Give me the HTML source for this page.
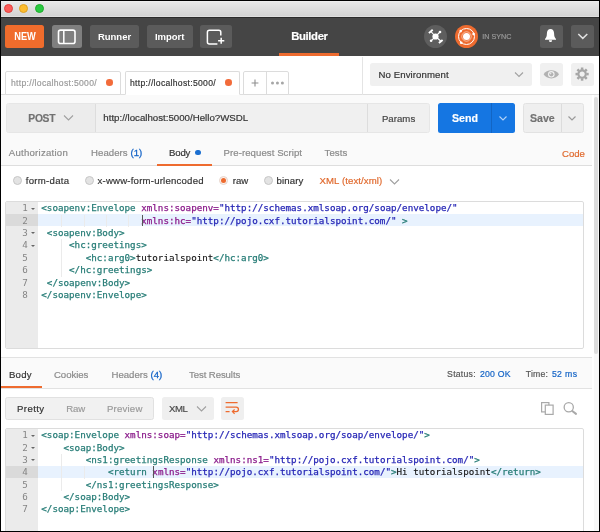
<!DOCTYPE html>
<html>
<head>
<meta charset="utf-8">
<title>Postman</title>
<style>
html,body{margin:0;padding:0;}
body{width:600px;height:532px;overflow:hidden;background:#000;font-family:"Liberation Sans",sans-serif;position:relative;}
#winbg{position:absolute;left:1px;top:1px;width:597.5px;height:529.5px;background:#fff;}
#win{position:absolute;left:1px;top:1px;width:597.5px;height:529.5px;overflow:hidden;will-change:transform;}
.abs{position:absolute;}
.t{position:absolute;white-space:nowrap;line-height:1;-webkit-text-stroke:0.18px currentColor;}
#titlebar{left:0;top:0;width:598px;height:15.5px;background:linear-gradient(#f4f4f4 0,#e8e8e8 6%,#d3d3d3 94%,#ebebeb 100%);}
.tl{position:absolute;top:3px;width:9.2px;height:9.2px;border-radius:50%;box-sizing:border-box;}
#toolbar{left:0;top:15.5px;width:598px;height:39.800px;background:#454545;}
.tbtn{position:absolute;top:8px;height:23.300px;border-radius:2.5px;background:#5b5b5b;color:#fff;font-weight:bold;font-size:9.5px;text-align:center;line-height:24.400px;}
#graybg{left:0;top:92.800px;width:591px;height:72.500px;background:#fafafa;border-top:1px solid #dedede;border-bottom:1px solid #dedede;box-sizing:border-box;}
.tab{position:absolute;top:69.500px;height:24px;border-radius:1.5px 1.5px 0 0;box-sizing:border-box;border:1px solid #dcdcdc;background:#fff;border-radius:2px 2px 0 0;}
.dot{position:absolute;width:6.600px;height:6.600px;border-radius:50%;background:#f26b3a;}
.box{position:absolute;box-sizing:border-box;background:#f0f0f0;border-radius:2.5px;}
.mono{font-family:"DejaVu Sans Mono","Liberation Mono",monospace;font-size:9.22px;white-space:pre;position:absolute;line-height:12.38px;height:12.38px;}
.tg{color:#277d77;} .at{color:#8a1a8a;} .st{color:#2626b6;} .tx{color:#111;} .mono span{-webkit-text-stroke:0.25px currentColor;} .mono span.tx{-webkit-text-stroke:0.1px currentColor;}
.ln{position:absolute;left:0;width:21.700px;text-align:right;font-family:"DejaVu Sans Mono","Liberation Mono",monospace;font-size:9.22px;color:#858585;line-height:12.38px;height:12.38px;}
.fold{position:absolute;left:25px;width:0;height:0;border-left:2px solid transparent;border-right:2px solid transparent;border-top:2.6px solid #666;}
.ig{position:absolute;width:0.8px;height:12.38px;background:#ebebeb;}
.radio{position:absolute;width:9.2px;height:9.2px;border-radius:50%;box-sizing:border-box;border:1px solid #c6c6c6;background:#e3e3e3;}
</style>
</head>
<body>
<div id="winbg"></div>
<div id="win">
  <!-- title bar -->
  <div id="titlebar" class="abs">
    <div class="tl" style="left:3px;background:#fc5b57;border:0.5px solid #df3f3c;"></div>
    <div class="tl" style="left:18.2px;background:#fdbc2e;border:0.5px solid #dea123;"></div>
    <div class="tl" style="left:33.7px;background:#29c940;border:0.5px solid #1dad2b;"></div>
  </div>
  <!-- toolbar -->
  <div id="toolbar" class="abs">
    <div class="abs" style="left:0;top:0;width:598px;height:1.2px;background:#2b2b2b;"></div>
    <div class="tbtn" style="left:4.2px;width:39.3px;background:#f06c2c;font-size:10.300px;line-height:24.200px;"><span style="display:inline-block;transform:scaleX(0.9);">NEW</span></div>
    <div class="tbtn" style="left:50.7px;width:30.8px;background:#7f7f7f;">
      <svg width="31" height="23.3" viewBox="0 0 31 23.3" style="position:absolute;left:0;top:0"><rect x="6.500" y="5.100" width="16.500" height="13.400" rx="2" fill="none" stroke="#fff" stroke-width="1.600"/><line x1="11.800" y1="5.100" x2="11.800" y2="18.500" stroke="#fff" stroke-width="1.500"/></svg>
    </div>
    <div class="tbtn" style="left:89px;width:49px;">Runner</div>
    <div class="tbtn" style="left:145.7px;width:46px;">Import</div>
    <div class="tbtn" style="left:199.4px;width:31.2px;">
      <svg width="31.2" height="23.3" viewBox="0 0 31.2 23.3" style="position:absolute;left:0;top:0"><path d="M20.800 10.600 V7.300 a2 2 0 0 0 -2 -2 H9.400 a2 2 0 0 0 -2 2 V17 a2 2 0 0 0 2 2 H17.400" fill="none" stroke="#fff" stroke-width="1.500"/><path d="M18.100 15.700 h6.200 M21.200 12.700 v6" stroke="#fff" stroke-width="1.500" fill="none"/></svg>
    </div>
    <div class="t" style="left:290.2px;top:14.200px;font-size:11.3px;color:#fff;font-weight:bold;letter-spacing:-0.35px;">Builder</div>
    <div class="abs" style="left:278px;top:36.5px;width:60px;height:2.500px;background:#ee6b2f;"></div>
    <!-- interceptor icon -->
    <div class="abs" style="left:423.3px;top:8.500px;width:23px;height:23px;border-radius:50%;background:#5e5e5e;">
      <svg width="23" height="23" viewBox="0 0 23 23"><g stroke="#fff" fill="none"><path d="M11.500 11.500 L6.800 6.400 M11.5 11.5 L16 7 M11.5 11.5 L7.100 15.800 M11.5 11.5 L16.700 16" stroke-width="1.100"/><path d="M4.900 8.100 L8.700 4.800 M14.900 18 L18.600 14.900" stroke-width="1.900"/></g><circle cx="11.5" cy="11.5" r="3.100" fill="#fff"/><circle cx="16" cy="7" r="1.300" fill="#fff"/><circle cx="7.100" cy="15.800" r="1.3" fill="#fff"/></svg>
    </div>
    <!-- sync icon -->
    <div class="abs" style="left:453.9px;top:8.5px;width:23px;height:23px;border-radius:50%;background:#ee6b2f;">
      <svg width="23" height="23" viewBox="0 0 23 23"><circle cx="11.5" cy="11.5" r="8" fill="none" stroke="#fff" stroke-width="1"/><circle cx="11.5" cy="11.500" r="4.700" fill="none" stroke="#fff" stroke-width="0.900" opacity="0.6"/><circle cx="11.5" cy="11.5" r="3.500" fill="#fff"/><circle cx="18.600" cy="9" r="1.300" fill="#fff"/><circle cx="5.700" cy="6.100" r="1.300" fill="#fff"/><circle cx="6.200" cy="17.700" r="1.300" fill="#fff"/></svg>
    </div>
    <div class="t" style="left:481.300px;top:16.400px;font-size:7.200px;color:#9a9a9a;">IN SYNC</div>
    <div class="tbtn" style="left:538.9px;width:23px;">
      <svg width="23" height="22.5" viewBox="0 0 23 22.5" style="position:absolute;left:0;top:0"><path d="M10.500 3.900 c-2.300 0 -3.600 2 -3.600 4.600 c0 2.900 -0.800 4.400 -1.900 5.500 v0.800 h11 v-0.800 c-1.100 -1.100 -1.900 -2.600 -1.900 -5.500 c0 -2.600 -1.300 -4.600 -3.600 -4.600 z" fill="#fff"/><path d="M8.900 15.200 a1.600 1.900 0 0 0 3.200 0 z" fill="#fff"/></svg>
    </div>
    <div class="tbtn" style="left:569.800px;width:23.100px;">
      <svg width="23" height="22.5" viewBox="0 0 23 22.5" style="position:absolute;left:0;top:0"><path d="M7.300 9 L11.800 13.400 L16.300 9" fill="none" stroke="#e0e0e0" stroke-width="1.500"/></svg>
    </div>
  </div>

  <!-- tabs row -->
  <div id="graybg" class="abs"></div>
  <div class="abs" style="left:360.5px;top:55.5px;width:1px;height:38px;background:#e4e4e4;"></div>
  <div class="tab" style="left:4px;width:115.5px;background:#fff;"></div>
  <div class="t" style="left:10.00px;top:78px;font-size:8.6px;color:#9a9a9a;letter-spacing:0.3px;">http://localhost:5000/</div>
  <div class="dot" style="left:105.400px;top:78.200px;"></div>
  <div class="tab" style="left:123.5px;width:115px;border-bottom-color:#fff;"></div>
  <div class="t" style="left:129.00px;top:78px;font-size:8.6px;color:#333;letter-spacing:0.3px;">http://localhost:5000/</div>
  <div class="dot" style="left:224.100px;top:78.200px;"></div>
  <div class="tab" style="left:241.800px;width:46px;"></div>
  <div class="abs" style="left:264.800px;top:70.5px;width:1px;height:22.5px;background:#dcdcdc;"></div>
  <svg class="abs" style="left:250.4px;top:78.1px" width="8" height="8" viewBox="0 0 8 8"><path d="M4 0.600 V7.400 M0.600 4 H7.400" stroke="#8e8e8e" stroke-width="1.100" fill="none"/></svg>
  <svg class="abs" style="left:269px;top:79.3px" width="16" height="6" viewBox="0 0 16 6"><circle cx="2.500" cy="3" r="1.500" fill="#a6a6a6"/><circle cx="7.450" cy="3" r="1.5" fill="#a6a6a6"/><circle cx="12.400" cy="3" r="1.5" fill="#a6a6a6"/></svg>

  <!-- environment -->
  <div class="box" style="left:369px;top:62.300px;width:162px;height:22.900px;"></div>
  <div class="t" style="left:377.50px;top:69.10px;font-size:9.6px;color:#333;letter-spacing:0.1px;">No Environment</div>
  <svg class="abs" style="left:513px;top:70px" width="10" height="8" viewBox="0 0 10 8"><path d="M1 1.5 L5 5.5 L9 1.5" fill="none" stroke="#a0a0a0" stroke-width="1.1"/></svg>
  <div class="box" style="left:539.2px;top:62.400px;width:22.600px;height:22.300px;">
    <svg width="22.6" height="22.3" viewBox="0 0 22.6 22.3" style="position:absolute;left:0;top:0"><path d="M3.600 11.300 C6.400 5.800 16.200 5.800 19 11.300 C16.200 16.800 6.400 16.800 3.600 11.300 z" fill="#b2b2b2"/><circle cx="11.300" cy="11.300" r="3.300" fill="#f0f0f0"/><circle cx="11.300" cy="11.300" r="2.100" fill="#b2b2b2"/><circle cx="10.600" cy="10.600" r="0.800" fill="#e4e4e4"/></svg>
  </div>
  <div class="box" style="left:569.800px;top:62.400px;width:23px;height:22.300px;">
    <svg width="23" height="22.3" viewBox="0 0 23 22.3" style="position:absolute;left:0;top:0"><g transform="translate(11.100 11.100)"><circle r="3.700" fill="none" stroke="#a6a6a6" stroke-width="2.100"/><g fill="#a6a6a6"><rect x="-1.250" y="-6.600" width="2.500" height="2.400"/><rect x="-1.250" y="4.200" width="2.500" height="2.400"/><rect x="-6.600" y="-1.250" width="2.400" height="2.500"/><rect x="4.200" y="-1.250" width="2.400" height="2.500"/><g transform="rotate(45)"><rect x="-1.250" y="-6.600" width="2.500" height="2.400"/><rect x="-1.250" y="4.200" width="2.500" height="2.400"/><rect x="-6.600" y="-1.250" width="2.400" height="2.500"/><rect x="4.200" y="-1.250" width="2.400" height="2.500"/></g></g></g></svg>
  </div>

  <!-- URL bar -->
  <div class="box" style="left:4.5px;top:101.5px;width:424.3px;height:30.5px;background:#f0f0f0;border:1px solid #e6e6e6;"></div>
  <div class="abs" style="left:5.5px;top:102.5px;width:88.5px;height:28.5px;background:#ececec;border-right:1px solid #dddddd;border-radius:2px 0 0 2px;"></div>
  <div class="t" style="left:27.35px;top:112.90px;font-size:10.3px;color:#727272;font-weight:bold;letter-spacing:-0.3px;">POST</div>
  <svg class="abs" style="left:62px;top:113.400px" width="11" height="8" viewBox="0 0 11 8"><path d="M1 1.500 L5.500 6 L10 1.5" fill="none" stroke="#a0a0a0" stroke-width="1.1"/></svg>
  <div class="t" style="left:102.30px;top:112.4px;font-size:9.7px;color:#333;">http://localhost:5000/Hello?WSDL</div>
  <div class="abs" style="left:366px;top:102.500px;width:61.800px;height:28.5px;background:#f0f0f0;border-left:1px solid #dddddd;box-sizing:border-box;border-radius:0 2px 2px 0;"></div>
  <div class="t" style="left:380.90px;top:112.50px;font-size:9.6px;color:#444;letter-spacing:0.05px;">Params</div>
  <div class="box" style="left:437px;top:101.5px;width:77px;height:30.5px;background:#1576e2;"></div>
  <div class="abs" style="left:489.800px;top:101.500px;width:1px;height:30.5px;background:#1265c4;"></div>
  <div class="t" style="left:451px;top:111.5px;font-size:10.6px;color:#fff;font-weight:bold;">Send</div>
  <svg class="abs" style="left:496.500px;top:113.500px" width="10" height="7" viewBox="0 0 10 7"><path d="M1.500 1.500 L5 5 L8.5 1.5" fill="none" stroke="#b4d3f6" stroke-width="1.1"/></svg>
  <div class="box" style="left:522.3px;top:101.5px;width:61px;height:30.5px;background:#efefef;border:1px solid #e2e2e2;"></div>
  <div class="abs" style="left:559.900px;top:102.5px;width:1px;height:28.5px;background:#dcdcdc;"></div>
  <div class="t" style="left:529px;top:111.5px;font-size:10.6px;color:#727272;font-weight:bold;">Save</div>
  <svg class="abs" style="left:566px;top:113.500px" width="10" height="7" viewBox="0 0 10 7"><path d="M1.5 1.5 L5 5 L8.5 1.500" fill="none" stroke="#9a9a9a" stroke-width="1.2"/></svg>

  <!-- request tabs -->
  <div class="t" style="left:7.75px;top:147px;font-size:9.6px;color:#8a8a8a;letter-spacing:0.25px;">Authorization</div>
  <div class="t" style="left:90px;top:147px;font-size:9.6px;color:#8a8a8a;letter-spacing:0.06px;">Headers <span style="color:#1766c8;-webkit-text-stroke:0.3px #1766c8;">(1)</span></div>
  <div class="t" style="left:168.00px;top:147px;font-size:9.6px;color:#333;letter-spacing:-0.15px;">Body</div>
  <div class="dot" style="left:194px;top:148.600px;width:5.800px;height:5.800px;background:#1b6fd0;"></div>
  <div class="abs" style="left:155.500px;top:162.800px;width:55.500px;height:2px;background:#ee6b2f;"></div>
  <div class="t" style="left:222.50px;top:147px;font-size:9.6px;color:#8a8a8a;letter-spacing:0.07px;">Pre-request Script</div>
  <div class="t" style="left:323.50px;top:147px;font-size:9.6px;color:#8a8a8a;letter-spacing:0.1px;">Tests</div>
  <div class="t" style="left:561.00px;top:148.40px;font-size:9.6px;color:#e0692d;letter-spacing:-0.05px;">Code</div>

  <!-- body type row -->
  <div class="radio" style="left:12px;top:175px;"></div>
  <div class="t" style="left:24.75px;top:175px;font-size:9.6px;color:#333;letter-spacing:0.28px;">form-data</div>
  <div class="radio" style="left:83.900px;top:175px;"></div>
  <div class="t" style="left:96.50px;top:175px;font-size:9.6px;color:#333;letter-spacing:0.21px;">x-www-form-urlencoded</div>
  <div class="radio" style="left:217.900px;top:175px;border-color:#e6d3ca;background:#fbf1ec;"><div class="abs" style="left:0.800px;top:0.800px;width:5.600px;height:5.600px;border-radius:50%;background:#ee6b2f;"></div></div>
  <div class="t" style="left:231.75px;top:175px;font-size:9.6px;color:#333;letter-spacing:0.04px;">raw</div>
  <div class="radio" style="left:262.900px;top:175px;"></div>
  <div class="t" style="left:275.50px;top:175px;font-size:9.6px;color:#333;letter-spacing:0.13px;">binary</div>
  <div class="t" style="left:318.50px;top:175px;font-size:9.6px;color:#e0692d;letter-spacing:0.1px;">XML (text/xml)</div>
  <svg class="abs" style="left:388px;top:177px" width="11" height="8" viewBox="0 0 11 8"><path d="M1 1.5 L5.5 6 L10 1.5" fill="none" stroke="#a0a0a0" stroke-width="1.1"/></svg>

  <!-- request editor -->
  <div class="abs" id="ed1" style="left:4px;top:200.300px;width:579px;height:147.800px;border:1px solid #dcdcdc;box-sizing:border-box;border-radius:2px;overflow:hidden;background:#fff;">
    <div class="abs" style="left:0;top:0;width:31.800px;height:146px;background:#ebebeb;"></div>
    <div class="abs" style="left:0;top:11.800px;width:31.800px;height:12.4px;background:#dadada;"></div>
    <div class="abs" style="left:31.800px;top:11.800px;width:546px;height:12.4px;background:#e8f2fe;"></div>
    <div class="ln" style="top:0px;">1</div><div class="fold" style="top:5.5px;"></div>
    <div class="ln" style="top:12.38px;">2</div>
    <div class="ln" style="top:24.76px;">3</div><div class="fold" style="top:30.2px;"></div>
    <div class="ln" style="top:37.14px;">4</div><div class="fold" style="top:42.6px;"></div>
    <div class="ln" style="top:49.52px;">5</div>
    <div class="ln" style="top:61.9px;">6</div>
    <div class="ln" style="top:74.28px;">7</div>
    <div class="ln" style="top:86.66px;">8</div>
    
    <div class="ig" style="left:55.40px;top:12.38px;"></div><div class="ig" style="left:77.60px;top:12.38px;"></div><div class="ig" style="left:99.81px;top:12.38px;"></div><div class="ig" style="left:122.01px;top:12.38px;"></div><div class="ig" style="left:55.40px;top:37.14px;"></div><div class="ig" style="left:55.40px;top:49.52px;"></div><div class="ig" style="left:55.40px;top:61.90px;"></div><div class="mono" style="left:35.3px;top:0px;"><span class="tg">&lt;soapenv:Envelope</span> <span class="at">xmlns:soapenv=</span><span class="st">"http://schemas.xmlsoap.org/soap/envelope/"</span></div>
    <div class="mono" style="left:35.3px;top:12.38px;">                  <span class="at">xmlns:hc=</span><span class="st">"http://pojo.cxf.tutorialspoint.com/"</span> <span class="tg">&gt;</span></div>
    <div class="mono" style="left:35.3px;top:24.76px;"> <span class="tg">&lt;soapenv:Body&gt;</span></div>
    <div class="mono" style="left:35.3px;top:37.14px;">     <span class="tg">&lt;hc:greetings&gt;</span></div>
    <div class="mono" style="left:35.3px;top:49.52px;">        <span class="tg">&lt;hc:arg0&gt;</span><span class="tx">tutorialspoint</span><span class="tg">&lt;/hc:arg0&gt;</span></div>
    <div class="mono" style="left:35.3px;top:61.9px;">     <span class="tg">&lt;/hc:greetings&gt;</span></div>
    <div class="mono" style="left:35.3px;top:74.28px;"> <span class="tg">&lt;/soapenv:Body&gt;</span></div>
    <div class="mono" style="left:35.3px;top:86.66px;"><span class="tg">&lt;/soapenv:Envelope&gt;</span></div>
    <div class="abs" style="left:135.900px;top:12.300px;width:0.800px;height:11.5px;background:#555;"></div>
  </div>

  <!-- response tabs -->
  <div class="abs" style="left:0;top:355.900px;width:591px;height:32.400px;background:#fafafa;border-top:1px solid #e2e2e2;border-bottom:1px solid #e2e2e2;box-sizing:border-box;"></div>
  <div class="t" style="left:8.00px;top:368.600px;font-size:9.6px;color:#333;letter-spacing:0.2px;">Body</div>
  <div class="abs" style="left:0px;top:384.700px;width:40.800px;height:2.700px;background:#ee6b2f;"></div>
  <div class="t" style="left:53.00px;top:368.600px;font-size:9.6px;color:#8a8a8a;letter-spacing:-0.06px;">Cookies</div>
  <div class="t" style="left:110.5px;top:368.600px;font-size:9.6px;color:#8a8a8a;">Headers <span style="color:#1766c8;-webkit-text-stroke:0.3px #1766c8;">(4)</span></div>
  <div class="t" style="left:188.00px;top:368.600px;font-size:9.6px;color:#8a8a8a;letter-spacing:-0.09px;">Test Results</div>
  <div class="t" style="left:446.10px;top:369.100px;font-size:8.7px;color:#555;letter-spacing:0.24px;">Status:</div>
  <div class="t" style="left:478.90px;top:369.100px;font-size:8.7px;color:#1464c6;-webkit-text-stroke:0.2px #1464c6;letter-spacing:0.23px;">200 OK</div>
  <div class="t" style="left:524.80px;top:369.100px;font-size:8.7px;color:#555;letter-spacing:0.17px;">Time:</div>
  <div class="t" style="left:550.90px;top:369.100px;font-size:8.7px;color:#1464c6;-webkit-text-stroke:0.2px #1464c6;letter-spacing:0.36px;">52 ms</div>

  <!-- response toolbar -->
  <div class="box" style="left:4.300px;top:396.100px;width:148.900px;height:23.100px;background:#f1f1f1;border:1px solid #e1e1e1;"></div>
  <div class="t" style="left:16.00px;top:402.600px;font-size:9.6px;color:#333;letter-spacing:0.4px;">Pretty</div>
  <div class="t" style="left:65.25px;top:402.600px;font-size:9.6px;color:#9a9a9a;letter-spacing:-0.08px;">Raw</div>
  <div class="t" style="left:106.00px;top:402.600px;font-size:9.6px;color:#9a9a9a;letter-spacing:0.2px;">Preview</div>
  <div class="box" style="left:161.400px;top:396.300px;width:51.200px;height:22.500px;background:#efefef;"></div>
  <div class="t" style="left:168.00px;top:402.600px;font-size:9.6px;color:#4a4a4a;letter-spacing:-0.45px;">XML</div>
  <svg class="abs" style="left:194.600px;top:404.200px" width="11" height="8" viewBox="0 0 11 8"><path d="M1 1.500 L5.500 6 L10 1.500" fill="none" stroke="#a0a0a0" stroke-width="1.100"/></svg>
  <div class="box" style="left:220.400px;top:396.300px;width:22.800px;height:22.500px;background:#efefef;">
    <svg width="22.8" height="21.8" viewBox="0 0 22.8 21.8" style="position:absolute;left:0;top:0"><path d="M4.600 5.700 H16.600 M4.600 10.100 H15.200 a2.250 2.250 0 0 1 0 4.500 H12 M4.600 14.600 H8.600" fill="none" stroke="#ee6b2f" stroke-width="1.300"/><path d="M13.600 12.500 L11.400 14.600 L13.600 16.700" fill="none" stroke="#ee6b2f" stroke-width="1.200"/></svg>
  </div>
  <!-- copy & search icons -->
  <svg class="abs" style="left:539px;top:400px" width="40" height="16" viewBox="0 0 40 16"><rect x="1.600" y="1.600" width="7.300" height="9.300" fill="none" stroke="#a9a9a9" stroke-width="1.200"/><rect x="5.300" y="4.100" width="7.800" height="9.300" fill="#fff" stroke="#a9a9a9" stroke-width="1.200"/><circle cx="28.750" cy="6.250" r="4.600" fill="none" stroke="#a9a9a9" stroke-width="1.300"/><path d="M32.300 10 L36 12.900" stroke="#a9a9a9" stroke-width="2" stroke-linecap="round"/></svg>

  <!-- response editor -->
  <div class="abs" id="ed2" style="left:4px;top:427.200px;width:579px;height:112px;border:1px solid #dcdcdc;box-sizing:border-box;border-radius:2px;overflow:hidden;background:#fff;">
    <div class="abs" style="left:0;top:0;width:31.800px;height:112px;background:#ebebeb;"></div>
    <div class="abs" style="left:0;top:36.700px;width:31.800px;height:12.4px;background:#dadada;"></div>
    <div class="abs" style="left:31.800px;top:36.700px;width:546px;height:12.400px;background:#e8f2fe;"></div>
    <div class="ln" style="top:0.00px;">1</div><div class="fold" style="top:5.50px;"></div>
    <div class="ln" style="top:12.38px;">2</div><div class="fold" style="top:17.90px;"></div>
    <div class="ln" style="top:24.76px;">3</div><div class="fold" style="top:30.30px;"></div>
    <div class="ln" style="top:37.14px;">4</div>
    <div class="ln" style="top:49.52px;">5</div>
    <div class="ln" style="top:61.90px;">6</div>
    <div class="ln" style="top:74.28px;">7</div>
    
    <div class="ig" style="left:55.40px;top:24.76px;"></div><div class="ig" style="left:55.40px;top:37.14px;"></div><div class="ig" style="left:77.60px;top:37.14px;"></div><div class="ig" style="left:55.40px;top:49.52px;"></div><div class="mono" style="left:35.3px;top:0.00px;"><span class="tg">&lt;soap:Envelope</span> <span class="at">xmlns:soap=</span><span class="st">"http://schemas.xmlsoap.org/soap/envelope/"</span><span class="tg">&gt;</span></div>
    <div class="mono" style="left:35.3px;top:12.38px;">    <span class="tg">&lt;soap:Body&gt;</span></div>
    <div class="mono" style="left:35.3px;top:24.76px;">        <span class="tg">&lt;ns1:greetingsResponse</span> <span class="at">xmlns:ns1=</span><span class="st">"http://pojo.cxf.tutorialspoint.com/"</span><span class="tg">&gt;</span></div>
    <div class="mono" style="left:35.3px;top:37.14px;">            <span class="tg">&lt;return</span> <span class="at">xmlns=</span><span class="st">"http://pojo.cxf.tutorialspoint.com/"</span><span class="tg">&gt;</span><span class="tx">Hi tutorialspoint</span><span class="tg">&lt;/return&gt;</span></div>
    <div class="mono" style="left:35.3px;top:49.52px;">        <span class="tg">&lt;/ns1:greetingsResponse&gt;</span></div>
    <div class="mono" style="left:35.3px;top:61.90px;">    <span class="tg">&lt;/soap:Body&gt;</span></div>
    <div class="mono" style="left:35.3px;top:74.28px;"><span class="tg">&lt;/soap:Envelope&gt;</span></div>
    <div class="abs" style="left:146.900px;top:37.200px;width:0.800px;height:11.5px;background:#555;"></div>
  </div>

  <!-- scrollbar -->
  <div class="abs" style="left:593px;top:54.800px;width:5px;height:476px;background:#fff;"></div><div class="abs" style="left:591px;top:92.800px;width:7px;height:1px;background:#dedede;"></div><div class="abs" style="left:592.500px;top:93.800px;width:5.500px;height:440px;background:#f8f8f8;"></div>
  <div class="abs" style="left:592.700px;top:96.400px;width:3.900px;height:257px;border-radius:2px;background:#dcdcdc;"></div>
</div>
</body>
</html>
